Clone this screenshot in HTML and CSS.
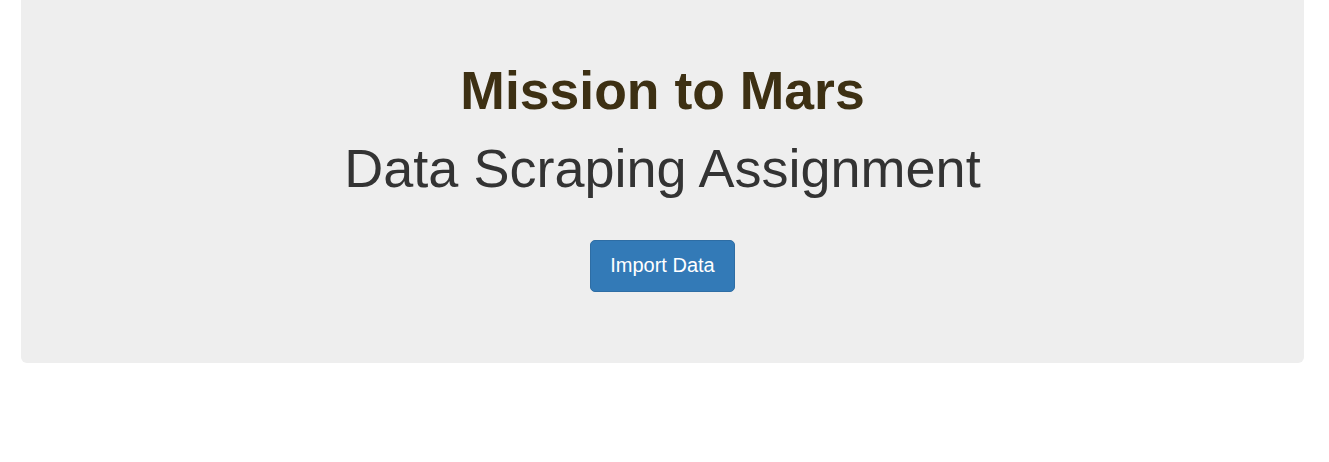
FILE: index.html
```html
<!DOCTYPE html>
<html lang="en">
<head>
<meta charset="utf-8">
<title>Mission to Mars</title>
<link rel="stylesheet" href="styles.css">
</head>
<body>
  <div class="container">
    <div class="jumbotron">
      <h1 class="title">Mission to Mars</h1>
      <p class="subtitle">Data Scraping Assignment</p>
      <p class="actions"><a class="btn" href="#">Import Data</a></p>
    </div>
  </div>
</body>
</html>
```

FILE: styles.css
```css
* { box-sizing: border-box; }

html, body {
  margin: 0;
  padding: 0;
  background: #fff;
}

body {
  font-family: "Liberation Sans", Arial, Helvetica, sans-serif;
  color: #333;
}

.container {
  padding: 0 25px 0 21px;
}

.jumbotron {
  background: #eeeeee;
  border-radius: 0 0 6px 6px;
  padding: 61px 20px 70px;
  text-align: center;
  height: 363px;
}

.title {
  margin: 0;
  font-size: 53.5px;
  line-height: 59px;
  font-weight: bold;
  color: #3d3013;
}

.subtitle {
  margin: 19px 0 0;
  font-size: 54px;
  line-height: 59px;
  color: #333;
}

.actions {
  margin: 0;
  padding-top: 42px;
}

.btn {
  display: inline-block;
  background: #337ab7;
  border: 1px solid #2e6da4;
  border-radius: 5px;
  color: #fff;
  text-decoration: none;
  font-size: 20px;
  line-height: 25px;
  padding: 12px 19px 13px;
}
```
